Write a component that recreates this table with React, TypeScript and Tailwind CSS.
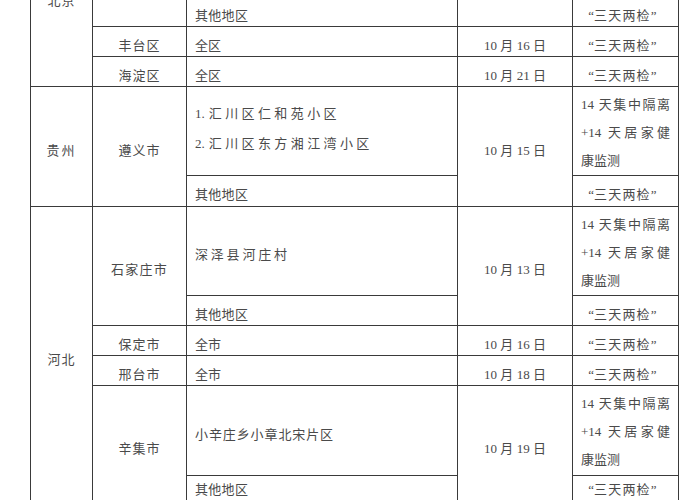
import React from "react";

const td = "border border-[#3a3a3a] text-[13px] text-[#4a4a4a] p-0";
const single = "pt-[8px] leading-[20px] align-middle";
const last = "pt-0 leading-[20px] align-middle";
const center = "text-center";
const left = "text-left pl-[8px]";

function Quote({ v = single }: { v?: string }) {
  return (
    <td className={`${td} ${v} text-left pl-[9px] whitespace-nowrap`}>
      <span className="inline-block w-[12px] text-right">“</span>
      <span className="tracking-[1.2px]">三天两检</span>
      <span className="inline-block w-[12px] text-left">”</span>
    </td>
  );
}

function Health() {
  return (
    <td className={`${td} align-top pt-[4px] px-[8px] leading-[28px]`}>
      <div className="text-justify [text-align-last:justify] whitespace-nowrap">14 天集中隔离</div>
      <div className="text-justify [text-align-last:justify] whitespace-nowrap">+14 天居家健</div>
      <div className="text-left">康监测</div>
    </td>
  );
}

function DateCell({ d, rs }: { d: string; rs?: number }) {
  return (
    <td rowSpan={rs} className={`${td} ${single} ${center} whitespace-nowrap`}>
      10 月 {d} 日
    </td>
  );
}

export default function App() {
  return (
    <div className="h-[500px] w-[700px] overflow-hidden bg-white font-['Liberation_Serif','Noto_Sans_CJK_SC',serif]">
      <table className="table-fixed border-collapse ml-[30px] -mt-[93px] w-[648px]">
        <colgroup>
          <col className="w-[62px]" />
          <col className="w-[94px]" />
          <col className="w-[271px]" />
          <col className="w-[115px]" />
          <col className="w-[106px]" />
        </colgroup>
        <tbody>
          <tr className="h-[89px]">
            <td rowSpan={4} className={`${td} ${single} ${center} tracking-[1px]`}>北京</td>
            <td rowSpan={2} className={`${td} ${single} ${center} tracking-[1px]`}>昌平区</td>
            <td className={`${td} ${single} ${left}`}>回龙观街道</td>
            <DateCell d="14" rs={2} />
            <Health />
          </tr>
          <tr className="h-[30px]">
            <td className={`${td} ${single} ${left} tracking-[0.3px]`}>其他地区</td>
            <Quote />
          </tr>
          <tr className="h-[30px]">
            <td className={`${td} ${single} ${center} tracking-[1px]`}>丰台区</td>
            <td className={`${td} ${single} ${left}`}>全区</td>
            <DateCell d="16" />
            <Quote />
          </tr>
          <tr className="h-[30px]">
            <td className={`${td} ${single} ${center} tracking-[1px]`}>海淀区</td>
            <td className={`${td} ${single} ${left}`}>全区</td>
            <DateCell d="21" />
            <Quote />
          </tr>
          <tr className="h-[89px]">
            <td rowSpan={2} className={`${td} ${single} ${center} tracking-[2px]`}>贵州</td>
            <td rowSpan={2} className={`${td} ${single} ${center} tracking-[1px]`}>遵义市</td>
            <td className={`${td} ${left} align-middle pb-[5px] leading-[30px]`}>
              <div>
                <span className="mr-[4px]">1.</span>
                <span className="tracking-[3.4px]">汇川区仁和苑小区</span>
              </div>
              <div>
                <span className="mr-[4px]">2.</span>
                <span className="tracking-[3.4px]">汇川区东方湘江湾小区</span>
              </div>
            </td>
            <DateCell d="15" rs={2} />
            <Health />
          </tr>
          <tr className="h-[31px]">
            <td className={`${td} ${single} ${left} tracking-[0.3px]`}>其他地区</td>
            <Quote />
          </tr>
          <tr className="h-[89px]">
            <td rowSpan={6} className={`${td} ${single} ${center} tracking-[1px]`}>河北</td>
            <td rowSpan={2} className={`${td} ${single} ${center} tracking-[1.3px]`}>石家庄市</td>
            <td className={`${td} ${single} ${left} tracking-[2.8px]`}>深泽县河庄村</td>
            <DateCell d="13" rs={2} />
            <Health />
          </tr>
          <tr className="h-[30px]">
            <td className={`${td} ${single} ${left} tracking-[0.3px]`}>其他地区</td>
            <Quote />
          </tr>
          <tr className="h-[30px]">
            <td className={`${td} ${single} ${center} tracking-[1px]`}>保定市</td>
            <td className={`${td} ${single} ${left}`}>全市</td>
            <DateCell d="16" />
            <Quote />
          </tr>
          <tr className="h-[30px]">
            <td className={`${td} ${single} ${center} tracking-[1px]`}>邢台市</td>
            <td className={`${td} ${single} ${left}`}>全市</td>
            <DateCell d="18" />
            <Quote />
          </tr>
          <tr className="h-[90px]">
            <td rowSpan={2} className={`${td} ${single} ${center} tracking-[1px]`}>辛集市</td>
            <td className={`${td} ${single} ${left} tracking-[0.9px]`}>小辛庄乡小章北宋片区</td>
            <DateCell d="19" rs={2} />
            <Health />
          </tr>
          <tr className="h-[29px]">
            <td className={`${td} ${last} ${left} tracking-[0.3px]`}>其他地区</td>
            <Quote v={last} />
          </tr>
        </tbody>
      </table>
    </div>
  );
}
